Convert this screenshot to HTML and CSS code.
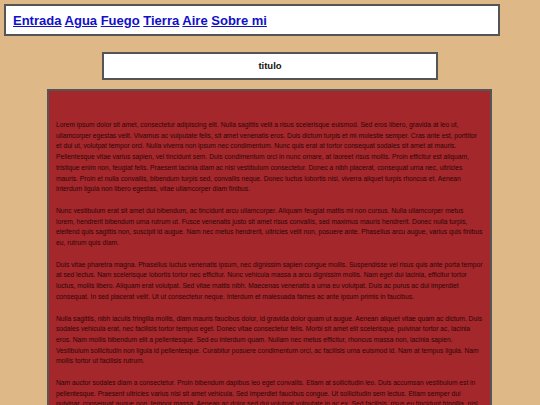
FILE: index.html
```html
<!DOCTYPE html>
<html lang="es">
<head>
<meta charset="utf-8">
<title>Entrada</title>
<link rel="stylesheet" href="styles.css">
</head>
<body>
<nav class="nav">
  <a href="#">Entrada</a>
  <a href="#">Agua</a>
  <a href="#">Fuego</a>
  <a href="#">Tierra</a>
  <a href="#">Aire</a>
  <a href="#">Sobre mi</a>
</nav>
<h1 class="title">titulo</h1>
<main class="content">
  <p>Lorem ipsum dolor sit amet, consectetur adipiscing elit. Nulla sagittis velit a risus scelerisque euismod. Sed eros libero, gravida at leo ut, ullamcorper egestas velit. Vivamus ac vulputate felis, sit amet venenatis eros. Duis dictum turpis et mi molestie semper. Cras ante est, porttitor et dui ut, volutpat tempor orci. Nulla viverra non ipsum nec condimentum. Nunc quis erat at tortor consequat sodales sit amet at mauris. Pellentesque vitae varius sapien, vel tincidunt sem. Duis condimentum orci in nunc ornare, at laoreet risus mollis. Proin efficitur est aliquam, tristique enim non, feugiat felis. Praesent lacinia diam ac nisi vestibulum consectetur. Donec a nibh placerat, consequat urna nec, ultricies mauris. Proin et nulla convallis, bibendum turpis sed, convallis neque. Donec luctus lobortis nisi, viverra aliquet turpis rhoncus et. Aenean interdum ligula non libero egestas, vitae ullamcorper diam finibus.</p>
  <p>Nunc vestibulum erat sit amet dui bibendum, ac tincidunt arcu ullamcorper. Aliquam feugiat mattis mi non cursus. Nulla ullamcorper metus lorem, hendrerit bibendum urna rutrum ut. Fusce venenatis justo sit amet risus convallis, sed maximus mauris hendrerit. Donec nulla turpis, eleifend quis sagittis non, suscipit id augue. Nam nec metus hendrerit, ultricies velit non, posuere ante. Phasellus arcu augue, varius quis finibus eu, rutrum quis diam.</p>
  <p>Duis vitae pharetra magna. Phasellus luctus venenatis ipsum, nec dignissim sapien congue mollis. Suspendisse vel risus quis ante porta tempor at sed lectus. Nam scelerisque lobortis tortor nec efficitur. Nunc vehicula massa a arcu dignissim mollis. Nam eget dui lacinia, efficitur tortor luctus, mollis libero. Aliquam erat volutpat. Sed vitae mattis nibh. Maecenas venenatis a urna eu volutpat. Duis ac purus ac dui imperdiet consequat. In sed placerat velit. Ut ut consectetur neque. Interdum et malesuada fames ac ante ipsum primis in faucibus.</p>
  <p>Nulla sagittis, nibh iaculis fringilla mollis, diam mauris faucibus dolor, id gravida dolor quam ut augue. Aenean aliquet vitae quam ac dictum. Duis sodales vehicula erat, nec facilisis tortor tempus eget. Donec vitae consectetur felis. Morbi sit amet elit scelerisque, pulvinar tortor ac, lacinia eros. Nam mollis bibendum elit a pellentesque. Sed eu interdum quam. Nullam nec metus efficitur, rhoncus massa non, lacinia sapien. Vestibulum sollicitudin non ligula id pellentesque. Curabitur posuere condimentum orci, ac facilisis urna euismod id. Nam at tempus ligula. Nam mollis tortor ut facilisis rutrum.</p>
  <p>Nam auctor sodales diam a consectetur. Proin bibendum dapibus leo eget convallis. Etiam at sollicitudin leo. Duis accumsan vestibulum est in pellentesque. Praesent ultricies varius nisi sit amet vehicula. Sed imperdiet faucibus congue. Ut sollicitudin sem lectus. Etiam semper dui pulvinar, consequat augue non, tempor massa. Aenean ac dolor sed dui volutpat vulputate in ac ex. Sed facilisis, risus eu tincidunt fringilla, nisl nunc aliquet est, sit amet ultrices lorem lacus in est.</p>
</main>
</body>
</html>
```

FILE: styles.css
```css
html, body {
  margin: 0;
  padding: 0;
  background: #deb887;
  font-family: "Liberation Sans", Arial, sans-serif;
}

body {
  padding: 4px 4px 0;
}

.nav {
  box-sizing: border-box;
  width: 496px;
  height: 32px;
  border: 2px solid #555;
  background: #fff;
  padding: 6px 7px 0;
  font-size: 13px;
  font-weight: bold;
  line-height: 17px;
}

.nav a {
  color: #1010c8;
  text-decoration: underline;
}

.title {
  box-sizing: border-box;
  width: 336px;
  height: 28px;
  margin: 16px 0 0 98px;
  border: 2px solid #555;
  background: #fff;
  font-size: 9.5px;
  font-weight: bold;
  line-height: 24px;
  text-align: center;
  color: #111;
}

.content {
  box-sizing: border-box;
  width: 445px;
  margin: 9px 0 0 43px;
  border: 2px solid #555;
  border-bottom: none;
  background: #a3272b;
  padding: 29px 7px 0;
  color: #2e0607;
  font-size: 6.7px;
  line-height: 10.7px;
}

.content p {
  margin: 0 0 11px;
}
```
